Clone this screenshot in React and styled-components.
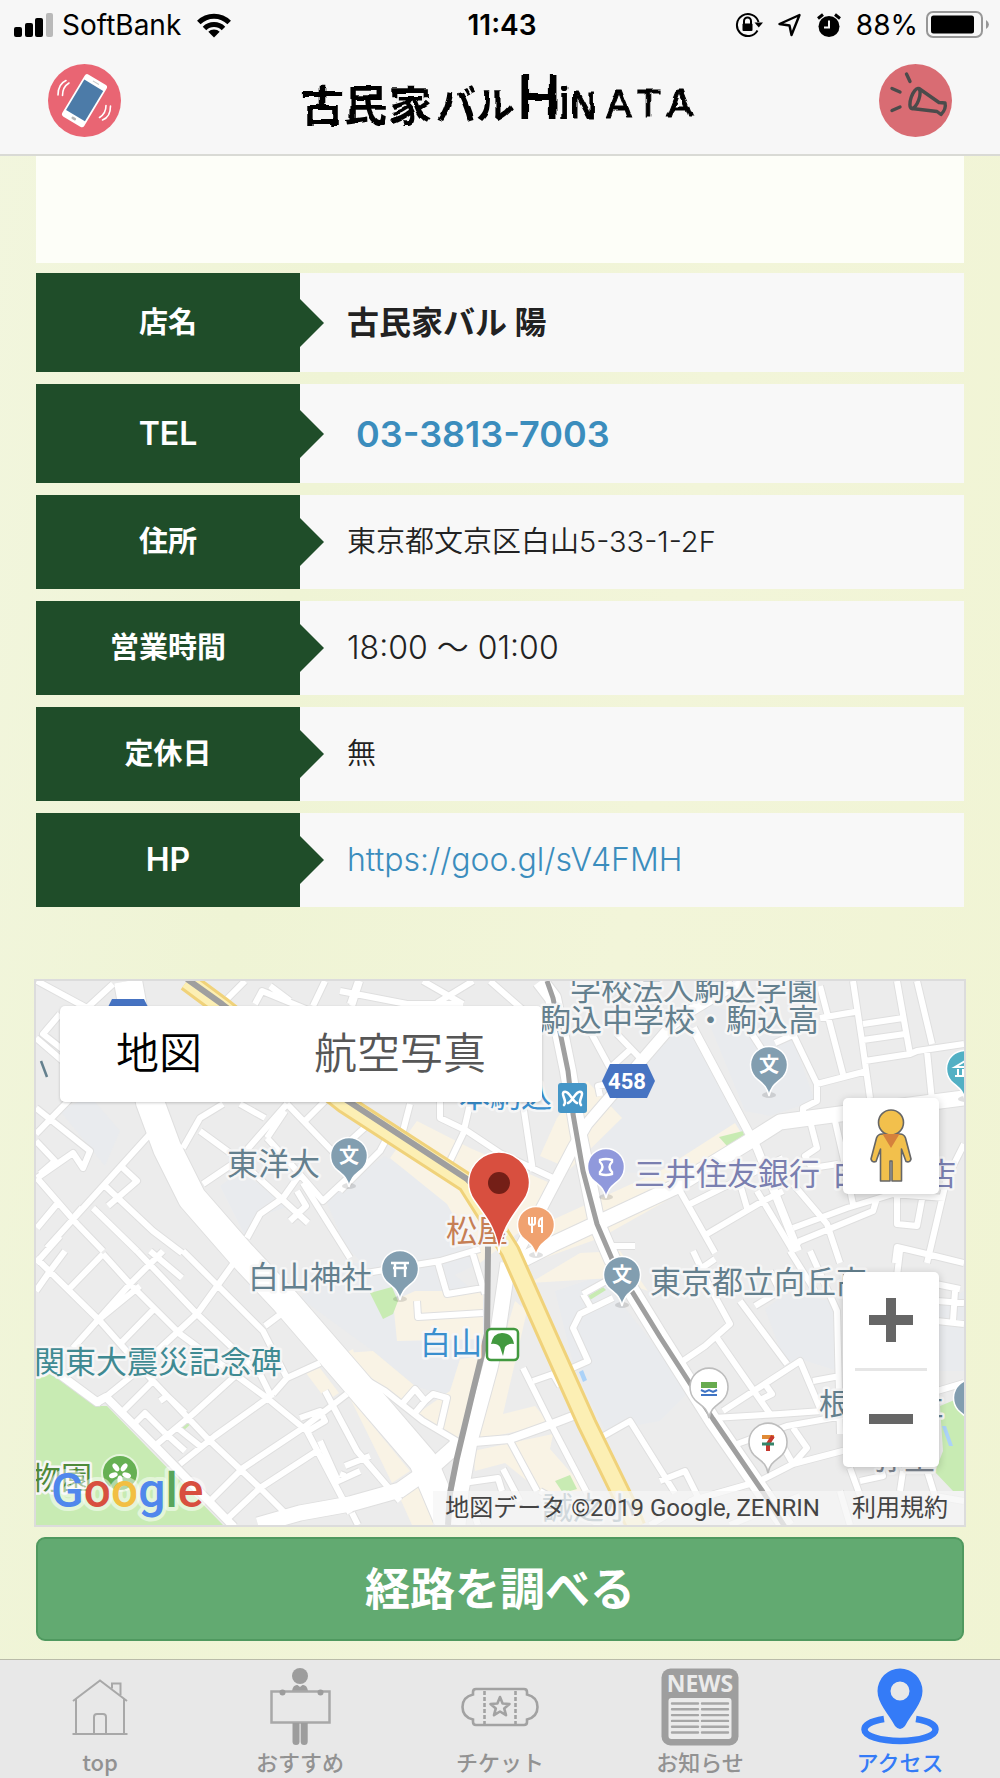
// LIBRARY
import React from "react";

// STYLE
import styled, { createGlobalStyle } from "styled-components";

// DATA
const shopInfo = [
  { label: "店名", value: "古民家バル 陽", type: "name" },
  { label: "TEL", value: "03-3813-7003", type: "tel" },
  { label: "住所", value: "東京都文京区白山5-33-1-2F" },
  { label: "営業時間", value: "18:00 〜 01:00", type: "time" },
  { label: "定休日", value: "無" },
  { label: "HP", value: "https://goo.gl/sV4FMH", type: "url" },
];

const logoGlyphs = [
  { char: "古", x: 301, y: 122, size: 43 },
  { char: "民", x: 344, y: 121, size: 43 },
  { char: "家", x: 389, y: 122, size: 43 },
  { char: "バ", x: 436, y: 120, size: 40 },
  { char: "ル", x: 476, y: 119, size: 38 },
  { char: "H", x: 517, y: 119, size: 62, latin: true },
  { char: "i", x: 558, y: 119, size: 48, latin: true },
  { char: "N", x: 570, y: 118, size: 36, wide: true },
  { char: "A", x: 606, y: 117, size: 38, wide: true },
  { char: "T", x: 637, y: 116, size: 36, wide: true },
  { char: "A", x: 667, y: 117, size: 38, wide: true },
];

// map : drawn on a 928x544 canvas that starts at (36, 980)
const campus = [
  "325,1197 385,1155 450,1200 480,1262 400,1300 345,1245",
  "300,1297 345,1262 440,1262 486,1300 486,1385 460,1400 415,1385 373,1350",
  "600,1100 690,1020 752,1145 700,1175 600,1170",
  "700,1000 790,1030 815,1100 770,1115 745,1110",
  "555,1290 600,1275 690,1390 660,1420 605,1430 575,1370",
  "765,1308 785,1293 833,1300 838,1370 800,1358 785,1362",
  "220,1185 240,1170 290,1205 260,1215 245,1235",
  "60,1110 90,1095 120,1130 105,1165",
  "932,1310 964,1290 964,1370 935,1370",
];

const shops = [
  "417,1120 470,1147 550,1182 540,1215 480,1262 447,1203 390,1157",
  "557,1117 587,1080 622,1117 570,1168 540,1155",
  "550,1220 660,1170 735,1122 745,1138 680,1192 600,1237 530,1262",
  "530,1282 580,1252 620,1250 648,1290 612,1277",
  "393,1300 415,1290 483,1290 483,1338 397,1340",
  "345,1352 373,1350 415,1385 405,1408",
  "460,1358 482,1355 457,1440 418,1412 450,1390",
  "515,1300 527,1310 503,1413 535,1405 550,1423 473,1440",
  "473,1450 553,1433 550,1448 587,1490 540,1490 505,1462 475,1470",
  "350,1397 410,1470 392,1482",
  "400,1497 417,1483 434,1524 412,1524",
  "306,1372 320,1367 339,1392 327,1400",
  "340,1355 353,1348 360,1375",
];

const parks = [
  "36,1363 60,1375 97,1405 107,1405 223,1524 36,1524",
  "370,1292 392,1286 398,1300 393,1313 383,1318",
  "719,1136 743,1130 744,1134 727,1145",
  "555,1480 570,1474 577,1488 563,1492",
  "588,1295 603,1286 606,1289 590,1299",
  "179,1427 188,1418 192,1422 183,1430",
  "940,1405 964,1395 964,1490 953,1490 935,1471 943,1450",
];

const streets = [
  // north west
  "M37 980 L87 1007 L113 983 M60 1013 L43 1033 L62 1048 M36 1037 L80 1075",
  "M36 1107 L90 1150 L83 1167 L73 1152 L37 1177 M36 1133 L70 1098 M36 1140 L55 1160 L40 1173",
  "M37 1177 L77 1223 L103 1250 M37 1227 L57 1203 M47 1247 L150 1133 M36 1262 L60 1235",
  "M123 1167 L137 1180 L108 1205 M103 1183 L153 1230 L182 1252 M93 1207 L137 1250",
  "M223 1103 L200 1117 L183 1147 M200 1130 L237 1157 L308 1222 M203 1183 L237 1160 L287 1103",
  "M240 1103 L265 1117 M267 1137 L285 1110 M267 1137 L297 1170 L323 1200 L353 1172",
  "M303 1182 L350 1257 M247 1237 L260 1213 L283 1197 L300 1173 M287 1103 L337 1155 M303 1122 L325 1100",
  "M297 1190 L306 1205 L290 1220 M75 1215 L82 1207",
  "M223 1002 L245 980 M255 1003 L262 990 L330 1018 M313 1005 L325 980 M270 985 L290 1000 M352 1005 L360 980",
  // north centre
  "M340 990 L407 1003 L463 1003 M350 1003 L358 980 M423 980 L463 1003 M437 1002 L473 980 M490 980 L530 1015",
  "M440 1100 L440 1117 L467 1130 L500 1152 L553 1177 M470 1103 L463 1133 L450 1160 M523 1103 L533 1170",
  "M410 1103 L403 1130 M387 1137 L380 1150 L340 1190 M372 1120 L350 1140",
  "M590 1030 L610 1067 L632 1047 M617 1033 L640 1057 M600 1095 L598 1085 L612 1082",
  // north east
  "M750 1030 L763 1050 M793 1033 L817 1083 L817 1100 L803 1107 L803 1117 M775 1042 L795 1033 M820 1017 L860 1010",
  "M853 980 L862 1040 L870 1097 M820 985 L843 1073 M817 1083 L867 1070 M863 1023 L903 1017 M863 1039 L905 1033",
  "M865 1060 L910 1053 L917 1050 L964 1043 M897 980 L910 1053 M917 980 L932 1043 M927 1050 L932 1100",
  "M680 1190 L715 1252 M690 1203 L730 1183 L783 1157 M707 1233 L763 1200 L783 1190 M740 1183 L747 1207",
  "M793 1183 L827 1223 L840 1262 M793 1227 L847 1207 L893 1193 L945 1197 M790 1250 L800 1240 L873 1210 L877 1197",
  "M897 1193 L897 1223 L917 1225 L923 1193 M964 1143 L947 1177 L927 1262 M810 1120 L817 1147 L805 1155 L812 1167 L838 1163",
  "M835 1120 L843 1155 L853 1203 M895 1262 L897 1246 L935 1255 L964 1262 M757 1190 L793 1250",
  // west grid
  "M36 1257 L100 1320 L153 1380 L207 1437 L260 1487 L290 1517",
  "M103 1253 L130 1283 L180 1333 L267 1397 L307 1430 L350 1512",
  "M137 1250 L197 1313 L260 1373 L272 1397 M183 1250 L210 1277 L263 1330 L287 1377",
  "M36 1290 L50 1270 L65 1250 M70 1287 L103 1253 M73 1347 L130 1283 L163 1250 M97 1320 L140 1285",
  "M120 1343 L155 1307 M143 1363 L197 1313 L233 1263 M97 1403 L150 1360 M123 1410 L153 1380 M157 1443 L193 1413 L235 1375",
  "M180 1463 L215 1435 L268 1397 M210 1500 L243 1467 L303 1427 L347 1393 M225 1520 L260 1487 L320 1448 M273 1393 L287 1377 L320 1362",
  "M265 1325 L285 1310 M150 1250 L182 1277 M340 1473 L345 1475 M308 1430 L325 1420 L320 1410 L300 1417",
  "M160 1400 L167 1395 L185 1412 M135 1422 L145 1412 L165 1432 M165 1432 L185 1450 M175 1425 L200 1445",
  "M325 1390 L357 1450 L400 1500 M345 1465 L370 1455 M352 1512 L358 1524 M320 1440 L338 1480 L360 1470",
  // centre
  "M360 1273 L440 1260 L480 1248 M438 1262 L447 1293 L483 1287 M472 1250 L485 1293 M417 1300 L418 1316 L483 1312",
  "M363 1377 L385 1390 L423 1420 L460 1442 M402 1403 L415 1388 L425 1400 L433 1393 L447 1397 L440 1427 M415 1412 L425 1400",
  "M523 1367 L553 1427 L587 1492 M533 1380 L553 1373 L560 1385 M613 1297 L580 1313 L573 1327 L588 1360 L570 1368",
  "M600 1437 L630 1420 L675 1492 M510 1440 L537 1490 M463 1482 L498 1477 L502 1490 M503 1468 L520 1500 M583 1293 L610 1278 M583 1293 L590 1305",
  "M470 1500 L478 1524 M540 1490 L600 1524 M650 1524 L700 1495",
  // south east
  "M713 1417 L780 1413 L822 1410 M723 1410 L800 1360 L822 1412 M740 1300 L787 1363 M717 1337 L770 1413 M765 1383 L772 1393 L758 1400",
  "M693 1250 L712 1290 L730 1323 L705 1345 L683 1360 M737 1443 L787 1425 L843 1415 M760 1480 L793 1463 L850 1448",
  "M793 1427 L807 1447 L793 1463 L780 1440 M810 1250 L837 1310 L840 1433 M790 1250 L815 1290 M755 1305 L780 1290 L770 1270",
  "M813 1380 L840 1375 M900 1250 L897 1275 L960 1288 M937 1320 L964 1323 M955 1290 L953 1320 M937 1390 L964 1382 M937 1300 L964 1302",
  "M850 1467 L862 1500 M860 1480 L883 1475 L880 1466 M925 1463 L935 1495 L964 1500 M900 1490 L903 1470",
  "M660 1480 L685 1470 L705 1510 M690 1500 L760 1480 M840 1490 L850 1524 M730 1524 L800 1495",
  "M690 1275 L715 1258 M600 1245 L635 1245",
];

const avenues = [
  { d: "M128 980 L150 1101 L167 1147 L192 1197 L240 1252 L285 1300 L350 1375 L423 1460 L450 1524", w: 28 },
  { d: "M258 1524 L300 1512 L350 1503 L400 1489 L430 1468 L458 1443", w: 15 },
  { d: "M450 1443 L510 1438 L552 1423 L578 1413", w: 8 },
  { d: "M508 1262 L498 1330 L490 1367 L470 1440 L461 1490 L458 1524", w: 15 },
  { d: "M508 1266 L553 1243 L673 1187 L750 1140 L780 1121 L840 1113 L964 1097", w: 15 },
  { d: "M740 980 L690 1010 L673 1023 L587 1123 L573 1147 L540 1210 L512 1262", w: 11 },
  { d: "M693 1027 L757 1147 L798 1250", w: 8 },
  { d: "M55 1370 L97 1401 L106 1396 L158 1448 L234 1526", w: 8 },
  { d: "M540 980 L553 997 L568 1070 L578 1130 L597 1223 L612 1258 L660 1336 L713 1420 L763 1492 L787 1526", w: 16 },
];

const highway = "M187 980 L222 1006 L345 1103 L467 1182 L510 1250 L553 1347 L587 1423 L627 1505 L636 1526";

const mapPins = [
  { x: 349, y: 1155, color: "#829eb0", char: "文" },
  { x: 769, y: 1064, color: "#829eb0", char: "文" },
  { x: 622, y: 1274, color: "#829eb0", char: "文" },
  { x: 400, y: 1268, color: "#829eb0", icon: "torii" },
  { x: 606, y: 1166, color: "#9099dc", icon: "bank" },
  { x: 536, y: 1224, color: "#f0a270", icon: "food" },
  { x: 965, y: 1068, color: "#52b0c4", icon: "museum" },
  { x: 972, y: 1397, color: "#829eb0" },
];

const mapLabels = [
  { x: 570, y: 999, color: "#64808e", text: "学校法人駒込学園" },
  { x: 540, y: 1030, color: "#64808e", text: "駒込中学校・駒込高" },
  { x: 227, y: 1174, color: "#64808e", text: "東洋大" },
  { x: 248, y: 1287, color: "#64808e", text: "白山神社" },
  { x: 650, y: 1292, color: "#64808e", text: "東京都立向丘高" },
  { x: 819, y: 1414, color: "#64808e", text: "根津神社" },
  { x: 873, y: 1468, color: "#7d8590", text: "弥生" },
  { x: 34, y: 1372, color: "#3f8a92", text: "関東大震災記念碑" },
  { x: 30, y: 1488, color: "#4f8a3a", text: "物園" },
  { x: 634, y: 1184, color: "#7a7fb0", text: "三井住友銀行" },
  { x: 832, y: 1184, color: "#7a7fb0", text: "白山支店" },
  { x: 446, y: 1241, color: "#c67f55", text: "松屋" },
  { x: 459, y: 1106, color: "#3a8fce", text: "本駒込" },
  { x: 420, y: 1353, color: "#3a8fce", text: "白山" },
  { x: 542, y: 1518, color: "#64808e", text: "誠之小" },
];

// ICONS
const SignalIcon = () => (
  <svg width="40" height="25" viewBox="0 0 40 25">
    <rect x="0" y="14" width="8" height="10" rx="2" />
    <rect x="11" y="10" width="8" height="14" rx="2" />
    <rect x="21" y="5" width="8" height="19" rx="2" />
    <rect x="32" y="0" width="7" height="24" rx="2" fill="#b9b9b9" />
  </svg>
);

const WifiIcon = () => (
  <svg width="34" height="25" viewBox="0 0 34 25">
    <g fill="none" stroke="#000" strokeWidth="5">
      <path d="M1.800 9.500 A21.500 21.500 0 0 1 32.200 9.500" />
      <path d="M7.500 15.500 A13.500 13.500 0 0 1 26.500 15.500" />
    </g>
    <path d="M17 24.500 L11.300 18.800 A8 8 0 0 1 22.700 18.800 Z" />
  </svg>
);

const LockIcon = () => (
  <svg width="28" height="26" viewBox="0 0 28 26">
    <g fill="none" stroke="#000" strokeWidth="2">
      <path d="M22.500 18.500 A11 11 0 1 1 23.500 10" />
      <path d="M9 12 V9 A3.500 3.500 0 0 1 16 9 V12" />
    </g>
    <path d="M19.500 10.500 H28 L23.800 15.500 Z" />
    <rect x="7.500" y="11.500" width="10" height="7.500" rx="1" />
  </svg>
);

const LocationIcon = () => (
  <svg width="24" height="24" viewBox="0 0 24 24">
    <path
      d="M21.500 2 L1.500 11 L11.500 12.500 L13.500 22 Z"
      fill="none"
      stroke="#000"
      strokeWidth="2.400"
      strokeLinejoin="round"
    />
  </svg>
);

const AlarmIcon = () => (
  <svg width="24" height="25" viewBox="0 0 24 25">
    <circle cx="12" cy="13.500" r="10.500" />
    <path d="M1 5.500 L6 1.500 M23 5.500 L18 1.500" stroke="#000" strokeWidth="3" />
    <path d="M12 7.500 V14.500 H7" fill="none" stroke="#f7f7f7" strokeWidth="2" />
  </svg>
);

const BatteryIcon = () => (
  <svg width="64" height="28" viewBox="0 0 64 28">
    <rect x="1" y="1" width="55" height="25" rx="6" fill="none" stroke="#979797" strokeWidth="2" />
    <rect x="5" y="4.500" width="43" height="18" rx="2.500" />
    <path d="M60 9 Q63 11 63 13.500 Q63 16 60 18 Z" fill="#979797" />
  </svg>
);

const PhoneIcon = () => (
  <svg width="73" height="73" viewBox="0 0 73 73">
    <circle cx="36.500" cy="36.500" r="36.500" fill="#e96573" />
    <g transform="translate(36.500 36.700) rotate(31)">
      <rect x="-12.800" y="-24.500" width="25.600" height="49" rx="3" fill="#fff" />
      <rect x="-11" y="-18" width="22" height="35.500" fill="#4c7ba8" />
      <path d="M-3 -21.300 H4" stroke="#c9c9c9" strokeWidth="1" />
      <rect x="-2.500" y="19.500" width="5" height="2.600" rx="1.300" fill="#b5b5b5" />
    </g>
    <g fill="none" stroke="#fff" strokeWidth="1.600" strokeLinecap="round">
      <path d="M10 31 Q10 20 18 16.500" />
      <path d="M14.500 31.500 Q14.500 23 21 19" />
      <path d="M62.500 42 Q62.500 53 54.500 56" />
      <path d="M58 41.500 Q58 49.500 51.500 53.500" />
    </g>
  </svg>
);

const MegaphoneIcon = () => (
  <svg width="73" height="73" viewBox="0 0 73 73">
    <circle cx="36.500" cy="36.500" r="36.500" fill="#d96c73" />
    <g fill="none" stroke="#4b4b4b" strokeWidth="3.400" strokeLinecap="round" strokeLinejoin="round">
      <ellipse cx="36" cy="34.500" rx="4" ry="10.500" transform="rotate(19 36 34.500)" />
      <path d="M40 24.500 L60 38.500 L66 39 Q67.500 45 62 50.500 L58 47.500 L33 44.500" />
      <path d="M27.500 10 L31 17.500 M13 24.500 L21 28 M13 46.500 L21 43" />
    </g>
  </svg>
);

const HouseIcon = () => (
  <svg width="78" height="78" viewBox="0 0 78 78">
    <g fill="none" stroke="#a8a8a8" strokeWidth="2">
      <path d="M12 33 L39 12.500 L66 33 M15 31 V66 M63 31 V66 M11.500 66 H66.500" />
      <path d="M33 66 V49 Q33 46 36 46 H42 Q45 46 45 49 V66" />
      <path d="M51 20.500 V15.500 H59.500 V27" />
    </g>
  </svg>
);

const BoardIcon = () => (
  <svg width="78" height="78" viewBox="0 0 78 78" fill="#9d9d9d">
    <circle cx="39" cy="8" r="8" />
    <path d="M31 23 Q32 16.500 36.500 17 L39 19 L41.500 17 Q46 16.500 47 23 Z" />
    <rect x="10.500" y="23.500" width="58" height="31" fill="none" stroke="#a8a8a8" strokeWidth="2.500" />
    <circle cx="21.500" cy="24.500" r="3" />
    <circle cx="59.500" cy="24.500" r="3" />
    <path d="M31.500 55 H38.500 V73.500 A3.500 3.500 0 0 1 31.500 73.500 Z" />
    <path d="M39.700 55 H46.700 V73.500 A3.500 3.500 0 0 1 39.700 73.500 Z" />
  </svg>
);

const TicketIcon = () => (
  <svg width="78" height="78" viewBox="0 0 78 78">
    <g fill="none" stroke="#a2a2a2" strokeWidth="2.600">
      <path d="M15 21 H63 Q66 21 66 24 V26.500 Q76.500 29 76.500 39 Q76.500 49 66 51.500 V54 Q66 57 63 57 H15 Q12 57 12 54 V51.500 Q1.500 49 1.500 39 Q1.500 29 12 26.500 V24 Q12 21 15 21 Z" />
      <path d="M23.500 23 V56 M54.500 23 V56" strokeDasharray="4 2" />
      <path
        d="M39 29 L41.600 35.500 L48.500 36 L43.200 40.400 L45 47.200 L39 43.500 L33 47.200 L34.800 40.400 L29.500 36 L36.400 35.500 Z"
        strokeLinejoin="round"
      />
    </g>
  </svg>
);

const NewsIcon = () => (
  <svg width="78" height="78" viewBox="0 0 78 78">
    <rect x="0.500" y="0.500" width="77" height="77" rx="9" fill="#9e9e9e" />
    <NewsText x="39" y="24">
      NEWS
    </NewsText>
    <rect x="7.500" y="30" width="63" height="41" rx="3" fill="#ebebeb" />
    <path
      d="M11 35.500 H37 M11 41.300 H37 M11 47.100 H37 M11 52.900 H37 M11 58.700 H37 M11 64.500 H37 M41 35.500 H67 M41 41.300 H67 M41 47.100 H67 M41 52.900 H67 M41 58.700 H67 M41 64.500 H67"
      stroke="#a6a6a6"
      strokeWidth="2.400"
      strokeLinecap="round"
    />
  </svg>
);

const AccessIcon = () => (
  <svg width="78" height="78" viewBox="0 0 78 78">
    <path
      d="M39 0.500 A22.500 22.500 0 0 0 16.500 23 C16.500 35 27 45 34 58 Q39 64 44 58 C51 45 61.500 35 61.500 23 A22.500 22.500 0 0 0 39 0.500 Z M39 13.500 A9.500 9.500 0 1 1 39 32.500 A9.500 9.500 0 1 1 39 13.500 Z"
      fill="#347bf7"
      fillRule="evenodd"
    />
    <path
      d="M23 51 C10 53 3.500 57 3.500 61.500 C3.500 68 19 73 39 73 C59 73 74.500 68 74.500 61.500 C74.500 57 68 53 55 51"
      fill="none"
      stroke="#347bf7"
      strokeWidth="6.500"
    />
  </svg>
);

const PegmanIcon = () => (
  <svg width="42" height="74" viewBox="0 0 42 74">
    <g fill="#f2c04c" stroke="#666" strokeWidth="1.600" strokeLinejoin="round">
      <path d="M12 25 H30 Q34 25 35.500 29 L41 50 Q40 54 36 52.500 L31.500 40 V72 H22 V52 H20 V72 H10.500 V40 L6 52.500 Q2 54 1 50 L6.500 29 Q8 25 12 25 Z" />
      <circle cx="21" cy="13.500" r="12.500" />
    </g>
    <path d="M12.500 25 H29.500 L21 39 Z" fill="#d5813c" />
  </svg>
);

const PinSymbol = ({ icon }) => {
  if (icon === "torii")
    return <path d="M-9 -6 H9 M-7 -1 H7 M-5 -6 V8 M5 -6 V8" stroke="#fff" strokeWidth="2.400" fill="none" />;
  if (icon === "bank")
    return (
      <path
        d="M-6 -7 Q0 -9 6 -7 V-5 Q1 0 6 5 V7 Q0 9 -6 7 V5 Q-1 0 -6 -5 Z"
        stroke="#fff"
        strokeWidth="2.400"
        fill="none"
      />
    );
  if (icon === "food")
    return (
      <path
        d="M-7 -8 V-2 Q-7 0 -4 0 Q-1 0 -1 -2 V-8 M-4 -8 V8 M6 8 V-7 Q2 -6 3 1 H6"
        stroke="#fff"
        strokeWidth="2"
        fill="none"
      />
    );
  if (icon === "museum")
    return <path d="M-10 -2 L0 -8 L10 -2 Z M-7 0 V7 M-2 0 V7 M-10 7 H8" stroke="#fff" strokeWidth="2" fill="none" />;
  return null;
};

const MapCanvas = () => (
  <MapSvg viewBox="36 980 928 544" preserveAspectRatio="xMidYMid slice" role="img" aria-label="古民家バル 陽 周辺の地図">
    <rect x="-400" y="980" width="1800" height="544" fill="#ececec" />
    {campus.map((points) => (
      <polygon key={points} points={points} fill="#e9ebee" />
    ))}
    {shops.map((points) => (
      <polygon key={points} points={points} fill="#f9f3e5" />
    ))}
    {parks.map((points) => (
      <polygon key={points} points={points} fill="#c8ebb3" />
    ))}
    <path d="M579 1371 L583 1369 L587 1379 L583 1381 Z M942 1425 L946 1425 L953 1445 L949 1445 Z" fill="#abd2f8" />

    {/* road : casing first, then the white surface */}
    <g fill="none" strokeLinejoin="round">
      <path d={streets.join(" ")} stroke="#dfdfdf" strokeWidth="8" />
      {avenues.map((road) => (
        <path key={road.d} d={road.d} stroke="#dfdfdf" strokeWidth={road.w + 2} />
      ))}
      <path d={streets.join(" ")} stroke="#fff" strokeWidth="6" />
      {avenues.map((road) => (
        <path key={road.d} d={road.d} stroke="#fff" strokeWidth={road.w} />
      ))}
      <path d={highway} stroke="#f0d27a" strokeWidth="21" />
      <path d={highway} stroke="#fcefb4" strokeWidth="15" />
      <path
        d="M187 978 L222 1003 L345 1098 L467 1178 L488 1200 L488 1250 L487 1333 L473 1390 L457 1457 L450 1492 L448 1524"
        stroke="#9f9f9f"
        strokeWidth="6"
      />
      <path
        d="M547 980 L553 997 L568 1070 L573 1113 L583 1170 L597 1223 L612 1258 L660 1336 L713 1418 L763 1491 L785 1526"
        stroke="#9f9f9f"
        strokeWidth="5"
      />
    </g>

    {mapLabels.map((label) => (
      <MapLabel key={label.text + label.x} x={label.x} y={label.y} fill={label.color}>
        {label.text}
      </MapLabel>
    ))}
    <path d="M41 1060 L47 1076" stroke="#64808e" strokeWidth="2.500" />

    {/* road number */}
    <path d="M106 1010 L112 998 H144 L150 1010 Z" fill="#4673c2" />
    <path d="M602 1080 L610 1063 H647 L655 1080 L647 1097 H610 Z" fill="#4673c2" />
    <RouteNumber x="627" y="1088">
      458
    </RouteNumber>

    {/* station */}
    <rect x="558" y="1082" width="29" height="30" rx="3" fill="#4596c7" />
    <path
      d="M564 1104 C568 1100 560 1093 564 1091 C569 1089 572 1100 577 1102 M581 1104 C577 1100 585 1093 581 1091 C576 1089 573 1100 568 1102"
      fill="none"
      stroke="#fff"
      strokeWidth="2.600"
      strokeLinecap="round"
    />
    <rect x="487" y="1328" width="31" height="31" rx="4" fill="#fff" stroke="#42993f" strokeWidth="2.500" />
    <path d="M491 1343 Q493 1332 502 1332 Q512 1332 514 1343 Q508 1342 505 1346 L503 1355 L500 1346 Q497 1342 491 1343 Z" fill="#42993f" />

    {mapPins.map((pin) => (
      <g key={`${pin.x}-${pin.y}`} transform={`translate(${pin.x} ${pin.y})`}>
        <ellipse cx="0" cy="30" rx="7" ry="3" fill="#000" opacity="0.120" />
        <path
          d="M0 31 C-2 20 -8 18 -14 12 A18.500 18.500 0 1 1 14 12 C8 18 2 20 0 31 Z"
          fill={pin.color}
          stroke="#fff"
          strokeWidth="1.500"
        />
        {pin.char && (
          <PinText x="0" y="7">
            {pin.char}
          </PinText>
        )}
        <PinSymbol icon={pin.icon} />
      </g>
    ))}

    {/* convenience store */}
    <g fill="#fff" stroke="#bdbdbd" strokeWidth="1.600">
      <path d="M709 1417 C707 1406 701 1405 695 1399 A19 19 0 1 1 723 1399 C717 1405 711 1406 709 1417 Z" />
      <path d="M768 1472 C766 1461 760 1460 754 1454 A19 19 0 1 1 782 1454 C776 1460 770 1461 768 1472 Z" />
    </g>
    <rect x="701" y="1381" width="16" height="6" fill="#67ab4f" />
    <path d="M701 1389 L705 1391 L709 1389 L713 1391 L717 1389 M701 1394 H717" stroke="#3f74c4" strokeWidth="2" fill="none" />
    <path d="M762 1436 H774" stroke="#e08a35" strokeWidth="4" />
    <path d="M773 1435 L768 1443 V1450" stroke="#c5382f" strokeWidth="4" fill="none" />
    <path d="M762 1443 H774" stroke="#35856a" strokeWidth="3" />

    {/* garden */}
    <circle cx="120" cy="1472" r="18" fill="#66b053" stroke="#e6f5dc" strokeWidth="2" />
    {[0, 72, 144, 216, 288].map((deg) => (
      <ellipse key={deg} cx="120" cy="1479" rx="2.600" ry="4.500" fill="#fff" transform={`rotate(${deg} 120 1472)`} />
    ))}

    {/* shop marker */}
    <path
      d="M499 1252 C497 1228 485 1215 474 1199 A30.500 30.500 0 1 1 524 1199 C513 1215 501 1228 499 1252 Z"
      fill="#d84f3f"
      stroke="#fff"
      strokeWidth="1.500"
    />
    <circle cx="499" cy="1182" r="11" fill="#741f17" />

    <GoogleText x="51" y="1506">
      <tspan fill="#5087ec">G</tspan>
      <tspan fill="#d84f3f">o</tspan>
      <tspan fill="#f2bf42">o</tspan>
      <tspan fill="#5087ec">g</tspan>
      <tspan fill="#58a55c">l</tspan>
      <tspan fill="#d84f3f">e</tspan>
    </GoogleText>
  </MapSvg>
);

// COMPONENTS
const InfoValue = ({ info }) => {
  if (info.type === "name") return <ShopName>{info.value}</ShopName>;
  if (info.type === "tel") return <TelLink href="tel:03-3813-7003">{info.value}</TelLink>;
  if (info.type === "url") return <InfoLink href="https://goo.gl/sV4FMH">{info.value}</InfoLink>;
  if (info.type === "time") return <OpenTime>{info.value}</OpenTime>;
  return info.value;
};

const tabs = [
  { label: "top", icon: <HouseIcon /> },
  { label: "おすすめ", icon: <BoardIcon /> },
  { label: "チケット", icon: <TicketIcon /> },
  { label: "お知らせ", icon: <NewsIcon /> },
  { label: "アクセス", icon: <AccessIcon />, active: true },
];

const App = () => {
  return (
    <React.Fragment>
      <GlobalStyle />
      <Wrapper>
        <Header>
          <StatusBar>
            <StatusLeft>
              <SignalIcon />
              <Carrier>SoftBank</Carrier>
              <WifiIcon />
            </StatusLeft>
            <Clock>11:43</Clock>
            <StatusRight>
              <LockIcon />
              <LocationIcon />
              <AlarmIcon />
              <Battery>
                88%
                <BatteryIcon />
              </Battery>
            </StatusRight>
          </StatusBar>
          <NavBar>
            <IconButton type="button" aria-label="シェイク">
              <PhoneIcon />
            </IconButton>
            <Logo viewBox="296 64 408 73">
              <filter id="brush" x="-5%" y="-10%" width="110%" height="120%">
                <feTurbulence type="fractalNoise" baseFrequency="0.090" numOctaves="1" seed="4" />
                <feDisplacementMap in="SourceGraphic" scale="5" xChannelSelector="R" yChannelSelector="G" />
              </filter>
              <g filter="url(#brush)">
                {logoGlyphs.map((glyph) => (
                  <LogoGlyph
                    key={glyph.x}
                    x={glyph.x}
                    y={glyph.y}
                    fontSize={glyph.size}
                    $latin={glyph.latin}
                    $wide={glyph.wide}
                  >
                    {glyph.char}
                  </LogoGlyph>
                ))}
              </g>
            </Logo>
            <IconButton type="button" aria-label="お知らせ">
              <MegaphoneIcon />
            </IconButton>
          </NavBar>
        </Header>

        <Content>
          <BlankPanel />
          <InfoTable>
            <InfoBody>
              {shopInfo.map((info) => (
                <InfoRow key={info.label} $tall={info.type === "name" || info.type === "tel"}>
                  <InfoHead scope="row" $latin={info.type === "tel" || info.type === "url"}>
                    {info.label}
                  </InfoHead>
                  <InfoCell>
                    <InfoValue info={info} />
                  </InfoCell>
                </InfoRow>
              ))}
            </InfoBody>
          </InfoTable>

          <MapBox>
            <MapCanvas />
            <MapTypes>
              <MapType type="button" $active>
                地図
              </MapType>
              <MapType type="button">航空写真</MapType>
            </MapTypes>
            <Pegman type="button" aria-label="ストリートビュー">
              <PegmanIcon />
            </Pegman>
            <ZoomBox>
              <ZoomButton type="button" aria-label="ズームイン">
                <svg width="44" height="44" viewBox="0 0 44 44">
                  <path d="M0 22 H44 M22 0 V44" stroke="#666" strokeWidth="10" />
                </svg>
              </ZoomButton>
              <ZoomLine />
              <ZoomButton type="button" aria-label="ズームアウト">
                <svg width="44" height="44" viewBox="0 0 44 44">
                  <path d="M0 22 H44" stroke="#666" strokeWidth="10" />
                </svg>
              </ZoomButton>
            </ZoomBox>
            <Credit>
              <span>地図データ ©2019 Google, ZENRIN</span>
              <a href="#terms">利用規約</a>
            </Credit>
          </MapBox>

          <RouteButton type="button">経路を調べる</RouteButton>
        </Content>

        <TabBar>
          {tabs.map((tab) => (
            <Tab key={tab.label} href="#tab" $active={tab.active}>
              {tab.icon}
              <span>{tab.label}</span>
            </Tab>
          ))}
        </TabBar>
      </Wrapper>
    </React.Fragment>
  );
};

const GlobalStyle = createGlobalStyle`
  * {
    box-sizing: border-box;
  }
  body {
    margin: 0;
    font-family: Inter, "Noto Sans CJK JP", sans-serif;
    color: #222;
  }
  button {
    margin: 0;
    padding: 0;
    border: none;
    background: none;
    font-family: inherit;
    cursor: pointer;
  }
  a {
    text-decoration: none;
  }
  svg {
    display: block;
    flex-shrink: 0;
  }
`;

const Wrapper = styled.div`
  display: flex;
  flex-direction: column;
  min-height: 100vh;
  background: linear-gradient(100deg, #f2f6de 0%, #eff4d5 30%, #f2f5d9 60%, #f0f4d3 100%);
`;
const Header = styled.header`
  background: #f7f7f7;
  border-bottom: 2px solid #d9dad5;
`;
const StatusBar = styled.div`
  display: grid;
  grid-template-columns: 1fr auto 1fr;
  align-items: center;
  height: 50px;
  padding: 0 10px 0 14px;
  font-size: 28px;
  line-height: 32px;
  color: #000;
`;
const StatusLeft = styled.div`
  display: flex;
  align-items: center;
  gap: 8px;
`;
const Carrier = styled.span`
  margin-right: 8px;
`;
const Clock = styled.span`
  font-weight: 600;
`;
const StatusRight = styled.div`
  display: flex;
  align-items: center;
  justify-content: flex-end;
  gap: 15px;
`;
const Battery = styled.span`
  display: flex;
  align-items: center;
  gap: 8px;
`;
const NavBar = styled.div`
  display: flex;
  align-items: center;
  justify-content: space-between;
  height: 104px;
  padding: 0 48px 3px;
`;
const IconButton = styled.button`
  width: 73px;
  height: 73px;
  border-radius: 50%;
`;
const Logo = styled.svg`
  width: 408px;
  height: 73px;
  overflow: visible;
`;
const LogoGlyph = styled.text`
  font-family: ${({ $latin, $wide }) =>
    $wide ? `"DejaVu Sans", sans-serif` : $latin ? "Roboto, sans-serif" : `"Noto Sans CJK JP", sans-serif`};
  font-weight: ${({ $latin, $wide }) => ($wide ? 400 : $latin ? 500 : 700)};
  stroke: #000;
  stroke-width: ${({ $wide }) => ($wide ? "1px" : "0")};
`;
const Content = styled.main`
  flex: 1;
  display: flex;
  flex-direction: column;
  padding: 0 36px 18px;
`;
const BlankPanel = styled.div`
  height: 107px;
  margin-bottom: 10px;
  background: #fdfef8;
`;
const InfoTable = styled.table`
  display: block;
  margin-bottom: 72px;
`;
const InfoBody = styled.tbody`
  display: flex;
  flex-direction: column;
  gap: 12px;
`;
const InfoRow = styled.tr`
  display: grid;
  grid-template-columns: 264px 1fr;
  min-height: ${({ $tall }) => ($tall ? "99px" : "94px")};
  background: #f8f8f8;
`;
const InfoHead = styled.th`
  position: relative;
  display: flex;
  align-items: center;
  justify-content: center;
  background: #1f4d29;
  color: #fff;
  font-size: ${({ $latin }) => ($latin ? "32px" : "29px")};
  font-weight: 600;
  line-height: 40px;
  &::after {
    content: "";
    position: absolute;
    left: 100%;
    top: 50%;
    margin-top: -24px;
    border: 24px solid transparent;
    border-left-color: #1f4d29;
    border-right: none;
  }
`;
const InfoCell = styled.td`
  display: flex;
  align-items: center;
  padding: 0 47px;
  font-size: 29px;
  font-weight: 350;
  line-height: 40px;
`;
const ShopName = styled.strong`
  font-size: 32px;
  font-weight: 700;
`;
const OpenTime = styled.time`
  font-size: 32px;
`;
const InfoLink = styled.a`
  font-size: 32px;
  color: #3b8dbd;
`;
const TelLink = styled(InfoLink)`
  padding-left: 9px;
  font-size: 36px;
  font-weight: 600;
`;
const MapBox = styled.section`
  position: relative;
  height: 548px;
  margin: 0 -2px 10px;
  border: 2px solid #dcdcdc;
  overflow: hidden;
`;
const MapSvg = styled.svg`
  width: 100%;
  height: 100%;
  font-family: "Noto Sans CJK JP", sans-serif;
`;
const MapLabel = styled.text`
  font-size: 31px;
  stroke: #f6f6f6;
  stroke-width: 5px;
  stroke-linejoin: round;
  paint-order: stroke;
`;
const PinText = styled.text`
  font-size: 20px;
  font-weight: 700;
  fill: #fff;
  text-anchor: middle;
`;
const RouteNumber = styled.text`
  font-family: Roboto, sans-serif;
  font-size: 22px;
  font-weight: 700;
  fill: #fff;
  text-anchor: middle;
`;
const GoogleText = styled.text`
  font-family: Roboto, sans-serif;
  font-size: 48px;
  font-weight: 500;
  stroke: rgba(255, 255, 255, 0.5);
  stroke-width: 8px;
  stroke-linejoin: round;
  paint-order: stroke;
`;
const NewsText = styled.text`
  font-family: "Noto Sans", sans-serif;
  font-size: 23px;
  font-weight: 700;
  fill: #ebebeb;
  text-anchor: middle;
`;
const MapTypes = styled.div`
  position: absolute;
  top: 25px;
  left: 24px;
  display: flex;
  height: 96px;
  border-radius: 5px;
  background: #fff;
  box-shadow: 0 1px 3px rgba(0, 0, 0, 0.2);
`;
const MapType = styled.button`
  padding: 0 56px 8px;
  font-family: "Noto Sans CJK JP", sans-serif;
  font-size: 43px;
  font-weight: 350;
  color: ${({ $active }) => ($active ? "#000" : "#565656")};
`;
const Pegman = styled.button`
  position: absolute;
  top: 117px;
  right: 25px;
  display: flex;
  align-items: center;
  justify-content: center;
  width: 96px;
  height: 96px;
  border-radius: 5px;
  background: #fff;
  box-shadow: 0 2px 8px rgba(0, 0, 0, 0.2);
`;
const ZoomBox = styled.div`
  position: absolute;
  right: 25px;
  bottom: 58px;
  width: 96px;
  border-radius: 5px;
  background: #fff;
  box-shadow: 0 2px 8px rgba(0, 0, 0, 0.2);
`;
const ZoomButton = styled.button`
  display: flex;
  align-items: center;
  justify-content: center;
  width: 96px;
  height: 96px;
`;
const ZoomLine = styled.div`
  height: 3px;
  margin: 0 12px;
  background: #e6e6e6;
`;
const Credit = styled.div`
  position: absolute;
  right: 0;
  bottom: 0;
  display: flex;
  gap: 32px;
  height: 34px;
  padding: 0 16px 0 12px;
  background: rgba(245, 245, 245, 0.75);
  font-family: Roboto, "Noto Sans CJK JP", sans-serif;
  font-size: 24px;
  line-height: 34px;
  color: #444;
  a {
    color: #444;
  }
`;
const RouteButton = styled.button`
  height: 104px;
  padding-bottom: 6px;
  border: 2px solid #4f995f;
  border-radius: 9px;
  background: #62aa71;
  color: #fff;
  font-size: 45px;
  font-weight: 700;
`;
const TabBar = styled.nav`
  display: flex;
  height: 120px;
  border-top: 1px solid #b9bba9;
  background: #e8e8e8;
`;
const Tab = styled.a`
  flex: 1;
  display: flex;
  flex-direction: column;
  align-items: center;
  padding-top: 8px;
  font-family: "Noto Sans CJK JP", sans-serif;
  font-size: 22px;
  font-weight: 500;
  line-height: 30px;
  color: ${({ $active }) => ($active ? "#347bf7" : "#929292")};
`;

export default App;
